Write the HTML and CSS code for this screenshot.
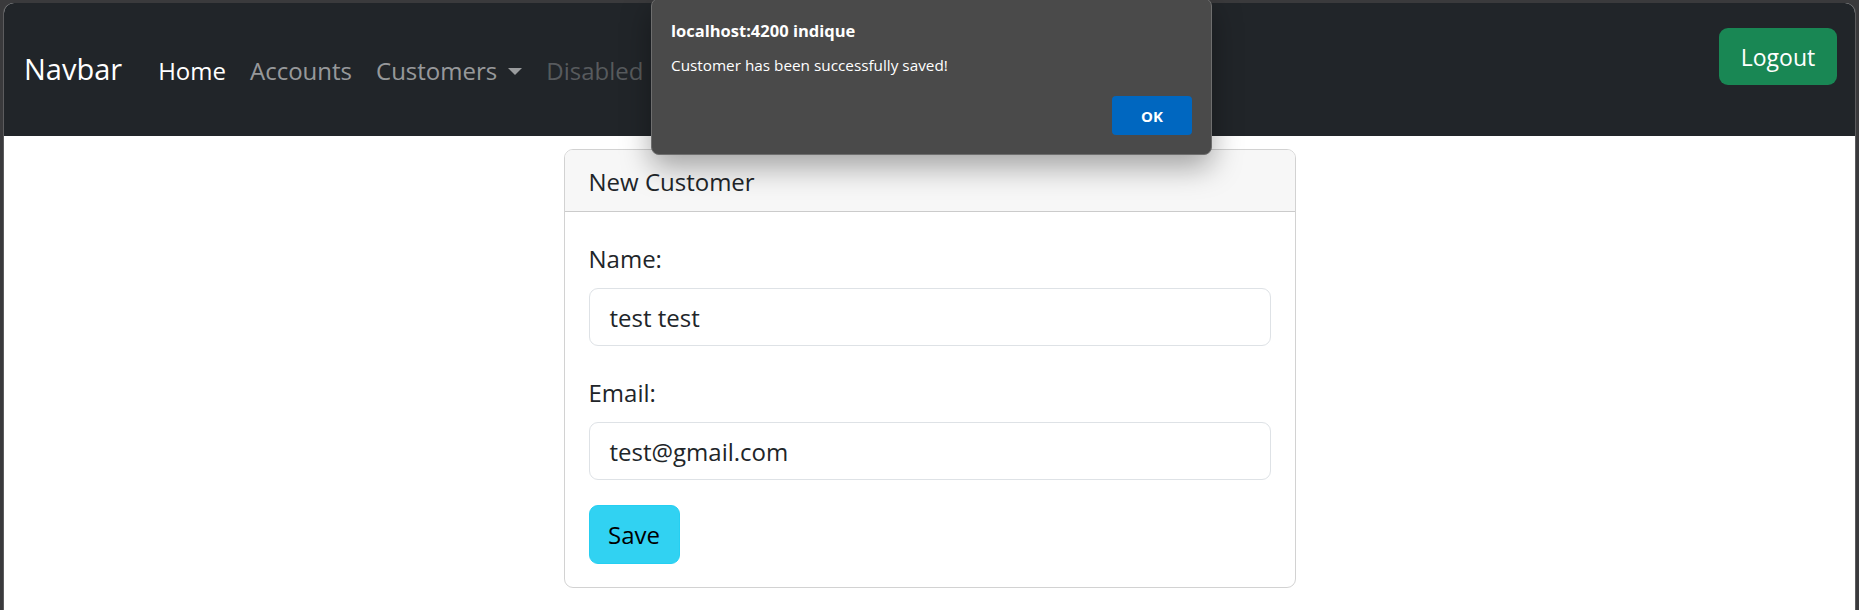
FILE: index.html
```html
<!DOCTYPE html>
<html lang="en">
<head>
<meta charset="utf-8">
<title>Customers</title>
<link rel="stylesheet" href="styles.css">
</head>
<body>
<div class="window">
  <nav class="navbar">
    <a class="brand" href="#">Navbar</a>
    <ul class="nav">
      <li><a class="nav-link active" href="#">Home</a></li>
      <li><a class="nav-link" href="#">Accounts</a></li>
      <li><a class="nav-link dropdown" href="#">Customers<span class="caret"></span></a></li>
      <li><a class="nav-link disabled" href="#">Disabled</a></li>
    </ul>
    <button class="logout">Logout</button>
  </nav>
  <main class="content">
    <div class="card">
      <div class="card-header">New Customer</div>
      <div class="card-body">
        <div class="group">
          <label class="label">Name:</label>
          <div class="input">test test</div>
        </div>
        <div class="group">
          <label class="label">Email:</label>
          <div class="input">test@gmail.com</div>
        </div>
        <button class="save">Save</button>
      </div>
    </div>
  </main>
</div>
<div class="dialog">
  <div class="dialog-title">localhost:4200 indique</div>
  <div class="dialog-msg">Customer has been successfully saved!</div>
  <div class="dialog-actions"><button class="ok">OK</button></div>
</div>
</body>
</html>
```
FILE: styles.css
```css
* { box-sizing: border-box; }
html, body { margin: 0; height: 100%; }
body {
  background: #3a3a3c;
  padding: 3px 4px 0 4px;
  font-family: "Open Sans", "Noto Sans", sans-serif;
  color: #212529;
  overflow: hidden;
}
.window {
  background: #fff;
  border-radius: 10px 10px 0 0;
  height: 100%;
  box-shadow: -1px 0 0 #5c5c5e, 1px 0 0 #5c5c5e;
}
.navbar {
  background: #212529;
  height: 133px;
  border-radius: 10px 10px 0 0;
  display: flex;
  align-items: center;
  padding: 0 18px 0 20px;
}
.brand {
  color: #fff;
  font-size: 29px;
  text-decoration: none;
  margin-right: 24px;
  line-height: 40px;
  margin-top: -2px;
}
.nav {
  list-style: none;
  margin: 2px 0 0;
  padding: 0;
  display: flex;
  flex: 1;
  align-items: center;
}
.nav-link {
  display: flex;
  align-items: center;
  padding: 0 12px;
  font-size: 24px;
  line-height: 36px;
  color: rgba(255,255,255,.55);
  text-decoration: none;
}
.nav-link.active { color: #fff; }
.nav-link.disabled { color: rgba(255,255,255,.25); }
.caret {
  display: inline-block;
  margin-left: 11px;
  width: 0; height: 0;
  border-top: 7px solid rgba(255,255,255,.55);
  border-left: 7px solid transparent;
  border-right: 7px solid transparent;
  margin-top: 2px;
}
.logout {
  align-self: flex-start;
  margin-top: 25px;
  height: 57px;
  width: 118px;
  background: #198754;
  color: #fff;
  border: none;
  border-radius: 9px;
  font-family: inherit;
  font-size: 23px;
  padding: 0;
}
.content {
  display: flex;
  justify-content: center;
  padding-top: 13px;
}
.card {
  width: 732px;
  border: 1px solid rgba(0,0,0,.175);
  border-radius: 9px;
  overflow: hidden;
}
.card-header {
  background: #f7f7f7;
  border-bottom: 1px solid rgba(0,0,0,.175);
  padding: 14px 24px 11px;
  font-size: 24px;
  line-height: 36px;
}
.card-body {
  padding: 29px 24px 23px;
}
.group { margin-bottom: 29px; }
.group:nth-child(2) { margin-bottom: 25px; }
.label {
  display: block;
  font-size: 24px;
  line-height: 36px;
  margin-bottom: 11px;
}
.input {
  height: 58px;
  border: 1px solid #dee2e6;
  border-radius: 9px;
  padding: 0 20px;
  display: flex;
  align-items: center;
  font-size: 24px;
}
.save {
  height: 59px;
  width: 91px;
  background: #31d2f2;
  border: 1px solid #25cff2;
  border-radius: 9px;
  font-family: inherit;
  font-size: 24px;
  color: #000;
  padding: 0;
}
.dialog {
  position: absolute;
  left: 651px;
  top: -2px;
  width: 561px;
  height: 157px;
  background: #4a4a4a;
  border: 1px solid #6e6e6e;
  border-radius: 8px;
  box-shadow: 0 12px 30px rgba(0,0,0,.35);
  padding: 21px 19px 0 19px;
  color: #fff;
}
.dialog-title {
  font-weight: 700;
  font-size: 16.5px;
  line-height: 22px;
}
.dialog-msg {
  font-size: 15.3px;
  line-height: 20px;
  margin-top: 13px;
}
.dialog-actions {
  display: flex;
  justify-content: flex-end;
  margin-top: 21px;
}
.ok {
  width: 80px;
  height: 39px;
  background: #0067c0;
  color: #fff;
  border: none;
  border-radius: 4px;
  font-family: inherit;
  font-weight: 700;
  font-size: 15px;
}
```
